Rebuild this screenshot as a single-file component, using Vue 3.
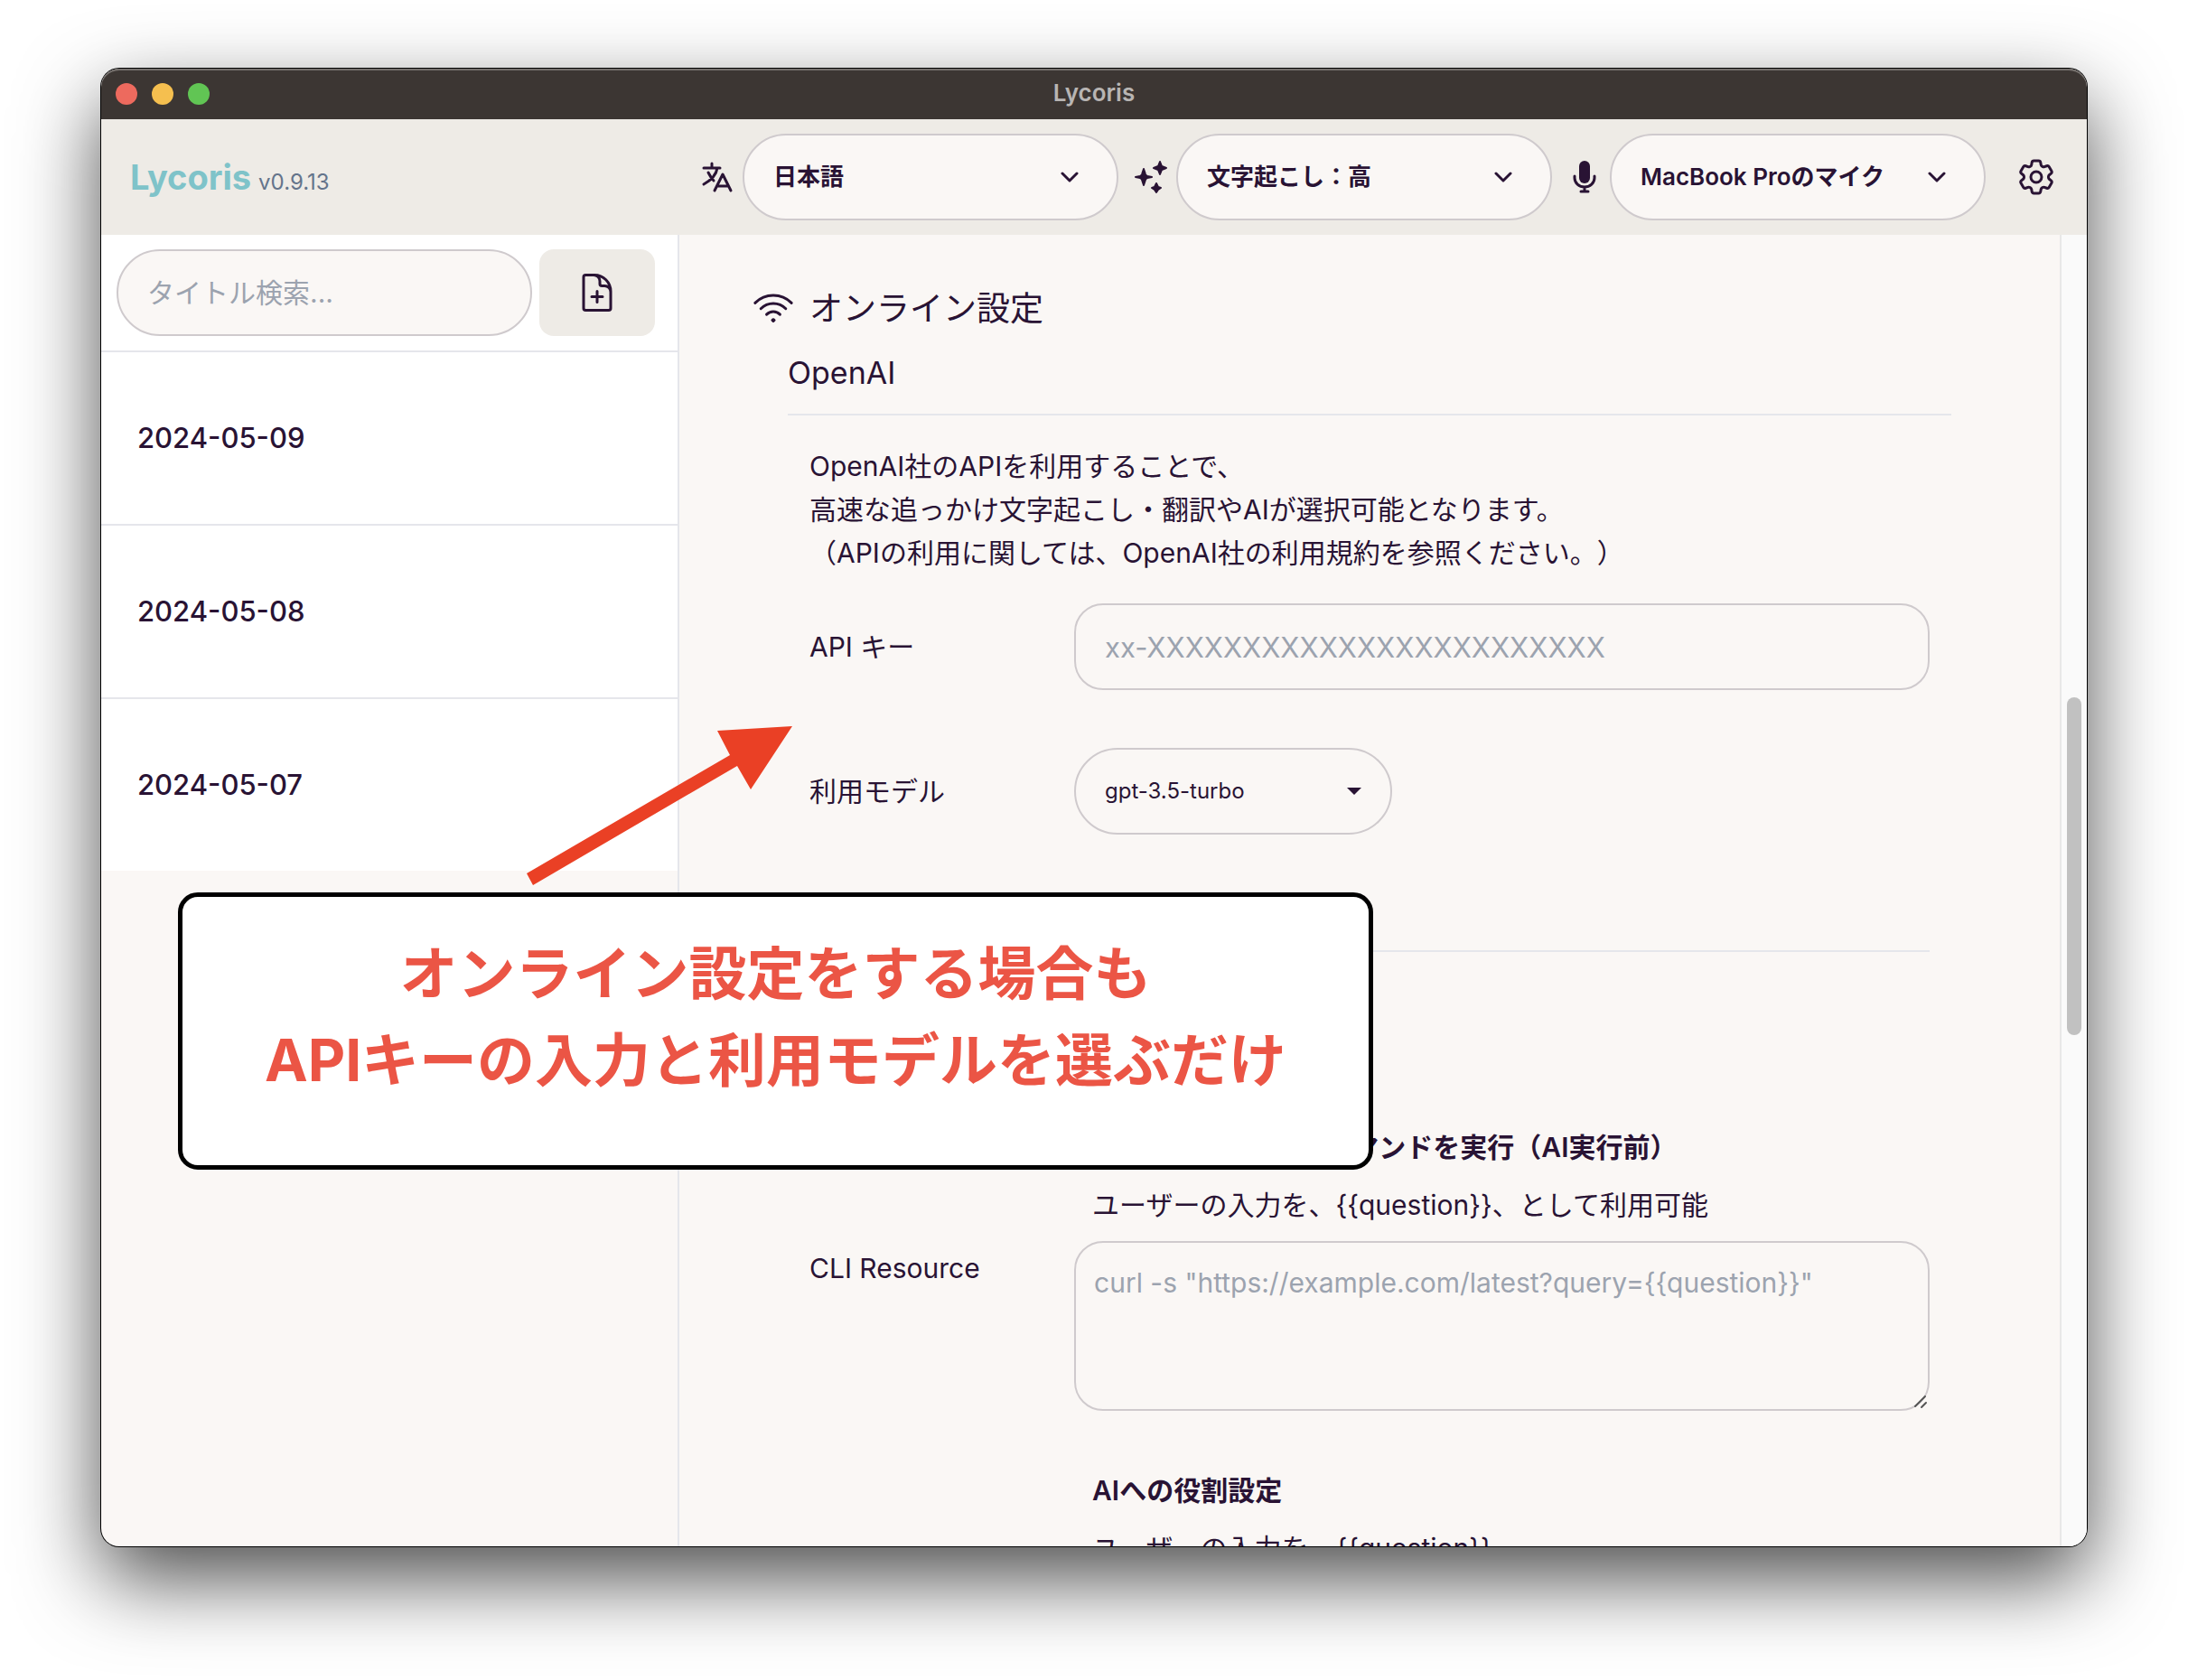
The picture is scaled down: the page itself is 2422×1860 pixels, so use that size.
<script setup>
import { ref } from 'vue'

const question = '{{question}}'
const query = ref('')
const apiKey = ref('')
const cli = ref('')
const model = ref('gpt-3.5-turbo')
const notes = ['2024-05-09', '2024-05-08', '2024-05-07']
const pickers = [
  { id: 'language', label: '言語', value: '日本語' },
  { id: 'transcribe', label: '文字起こし', value: '文字起こし：高' },
  { id: 'mic', label: 'マイク', value: 'MacBook Proのマイク' },
]
</script>

<template>
  <div class="stage">
    <div class="window">
      <div class="titlebar">
        <div class="lights"><i class="red"></i><i class="yellow"></i><i class="green"></i></div>
        <span class="title">Lycoris</span>
      </div>

      <header class="header">
        <div class="brand"><strong>Lycoris</strong><span>v0.9.13</span></div>
        <div class="tools">
          <div v-for="p in pickers" :key="p.id" class="picker">
            <label :for="p.id" :aria-label="p.label">
              <svg v-if="p.id === 'language'" class="icon" viewBox="0 0 40 40" fill="none" stroke="currentColor" stroke-width="3" stroke-linecap="round" stroke-linejoin="round">
                <path d="M14 5v5M5 10h18M20 10c-1 7-6 13-15 18M10 15c2 4 4 7 6 9M17 35l9-18 9 18M20 30h12" />
              </svg>
              <svg v-else-if="p.id === 'transcribe'" class="icon" viewBox="0 0 40 40" fill="currentColor" stroke="currentColor" stroke-width="2" stroke-linejoin="round">
                <path d="M12 11l2 6c.4 1 .8 1.500 2 2l5 1-5 1c-1.200.500-1.600 1-2 2l-2 6-2-6c-.4-1-.8-1.500-2-2l-5-1 5-1c1.200-.5 1.600-1 2-2z" />
                <path d="M30 3l2 5 5 2-5 2-2 5-2-5-5-2 5-2z" />
                <path d="M26 27l2 4 3 1-3 2-2 3-2-3-3-2 3-1z" />
              </svg>
              <svg v-else class="icon" viewBox="0 0 40 40" fill="none" stroke="currentColor" stroke-width="3" stroke-linecap="round">
                <rect x="14" y="2" width="12" height="25" rx="6" fill="currentColor" stroke="none" />
                <path d="M9 19v2a11 10 0 0 0 22 0v-2M20 31v5M16 36h8" />
              </svg>
            </label>
            <div class="select-box">
              <select :id="p.id"><option>{{ p.value }}</option></select>
              <svg class="chevron" viewBox="0 0 20 12" fill="none" stroke="currentColor" stroke-width="3" stroke-linecap="round" stroke-linejoin="round"><path d="M2 2l8 8 8-8" /></svg>
            </div>
          </div>
          <button class="gear" type="button" aria-label="設定">
            <svg viewBox="0 0 24 24" fill="none" stroke="currentColor" stroke-width="1.5" stroke-linecap="round" stroke-linejoin="round">
              <path d="M9.594 3.94c.09-.542.56-.94 1.11-.94h2.593c.55 0 1.020.398 1.110.94l.213 1.281c.063.374.313.686.645.87.074.04.147.083.22.127.325.196.72.257 1.075.124l1.217-.456a1.125 1.125 0 0 1 1.370.49l1.296 2.247a1.125 1.125 0 0 1-.26 1.431l-1.003.827c-.293.241-.438.613-.43.992a7.723 7.723 0 0 1 0 .255c-.008.378.137.75.43.991l1.004.827c.424.35.534.955.26 1.430l-1.298 2.247a1.125 1.125 0 0 1-1.369.491l-1.217-.456c-.355-.133-.75-.072-1.076.124a6.470 6.470 0 0 1-.22.128c-.331.183-.581.495-.644.869l-.213 1.281c-.09.543-.56.94-1.110.94h-2.594c-.55 0-1.019-.398-1.110-.94l-.213-1.281c-.062-.374-.312-.686-.644-.87a6.520 6.520 0 0 1-.22-.127c-.325-.196-.72-.257-1.076-.124l-1.217.456a1.125 1.125 0 0 1-1.369-.49l-1.297-2.247a1.125 1.125 0 0 1 .26-1.431l1.004-.827c.292-.24.437-.613.43-.991a6.932 6.932 0 0 1 0-.255c.007-.38-.138-.751-.43-.992l-1.004-.827a1.125 1.125 0 0 1-.26-1.430l1.297-2.247a1.125 1.125 0 0 1 1.370-.491l1.216.456c.356.133.751.072 1.076-.124.072-.044.146-.086.22-.128.332-.183.582-.495.644-.869l.214-1.280Z" />
              <path d="M15 12a3 3 0 1 1-6 0 3 3 0 0 1 6 0Z" />
            </svg>
          </button>
        </div>
      </header>

      <div class="body">
        <aside class="sidebar">
          <div class="search">
            <input v-model="query" type="text" placeholder="タイトル検索..." aria-label="タイトル検索" />
            <button type="button" aria-label="新規作成">
              <svg viewBox="0 0 24 24" fill="none" stroke="currentColor" stroke-width="1.5" stroke-linecap="round" stroke-linejoin="round">
                <path d="M19.5 14.25v-2.625a3.375 3.375 0 0 0-3.375-3.375h-1.500A1.125 1.125 0 0 1 13.5 7.125v-1.500a3.375 3.375 0 0 0-3.375-3.375H8.250m3.750 9v6m3-3H9m1.500-12H5.625c-.621 0-1.125.504-1.125 1.125v17.250c0 .621.504 1.125 1.125 1.125h12.750c.621 0 1.125-.504 1.125-1.125V11.250a9 9 0 0 0-9-9Z" />
              </svg>
            </button>
          </div>
          <ul class="notes">
            <li v-for="n in notes" :key="n"><a href="#">{{ n }}</a></li>
          </ul>
        </aside>

        <main class="content">
          <h2>
            <svg viewBox="0 0 24 24" fill="none" stroke="currentColor" stroke-width="1.5" stroke-linecap="round" stroke-linejoin="round">
              <path d="M8.288 15.038a5.250 5.250 0 0 1 7.424 0M5.106 11.856c3.807-3.808 9.980-3.808 13.788 0M1.924 8.674c5.565-5.565 14.587-5.565 20.152 0M12.530 18.220l-.53.53-.53-.53a.75.75 0 0 1 1.060 0Z" />
            </svg>
            オンライン設定
          </h2>
          <section class="provider">
            <h3>OpenAI</h3>
            <div class="fields">
              <p class="lead">
                OpenAI社のAPIを利用することで、<br />
                高速な追っかけ文字起こし・翻訳やAIが選択可能となります。<br />
                （APIの利用に関しては、OpenAI社の利用規約を参照ください。）
              </p>
              <div class="row">
                <label for="api-key">API キー</label>
                <input id="api-key" v-model="apiKey" class="key" type="text" placeholder="xx-XXXXXXXXXXXXXXXXXXXXXXXX" />
              </div>
              <div class="row">
                <label for="model">利用モデル</label>
                <div class="select-box model">
                  <select id="model" v-model="model"><option>gpt-3.5-turbo</option></select>
                  <svg class="caret" viewBox="0 0 16 8" fill="currentColor"><path d="M0 0h16L8 8z" /></svg>
                </div>
              </div>
              <hr />
              <div class="row">
                <label for="cli">CLI Resource</label>
                <div class="stack">
                  <h4>CLIから任意の外部コマンドを実行（AI実行前）</h4>
                  <p>ユーザーの入力を、{{ question }}、として利用可能</p>
                  <div class="area">
                    <textarea id="cli" v-model="cli" :placeholder="`curl -s &quot;https://example.com/latest?query=${question}&quot;`"></textarea>
                    <svg class="grip" viewBox="0 0 16 16" fill="none" stroke="#555" stroke-width="2" stroke-linecap="round"><path d="M2 13L13 2M9 14l5-5" /></svg>
                  </div>
                </div>
              </div>
              <div class="row">
                <span></span>
                <div class="stack">
                  <h4>AIへの役割設定</h4>
                  <p>ユーザーの入力を、{{ question }}</p>
                </div>
              </div>
            </div>
          </section>
        </main>
        <div class="scrollbar"><div class="thumb"></div></div>
      </div>
    </div>

    <svg class="arrow" viewBox="0 0 294 176" fill="#ea4025"><path d="M0 163L225 32 211 5 294 0 248 70 233 44 7 176z" /></svg>
    <div class="callout">オンライン設定をする場合も<br />APIキーの入力と利用モデルを選ぶだけ</div>
  </div>
</template>

<style>
body {
  margin: 0;
  background: #fff;
}
</style>

<style scoped>
* {
  box-sizing: border-box;
}
.stage {
  position: relative;
  height: 100vh;
  padding: 76px 112px 148px;
  overflow: hidden;
  font-family: Inter, "Noto Sans CJK JP", sans-serif;
  font-size: 30px;
  line-height: 48px;
  text-spacing-trim: space-all;
  color: #291334;
}
.window {
  display: flex;
  flex-direction: column;
  height: 100%;
  overflow: hidden;
  border-radius: 20px;
  background: #faf7f5;
  box-shadow: 0 0 0 1px #000, 0 36px 90px rgba(0, 0, 0, 0.7);
}
.titlebar {
  display: grid;
  grid-template-columns: 1fr auto 1fr;
  align-items: center;
  flex: none;
  height: 56px;
  padding: 0 16px;
  border-radius: 20px 20px 0 0;
  background: #3c3633;
  box-shadow: inset 0 2px 0 #75706d;
}
.lights {
  display: flex;
  gap: 16px;
}
.lights i {
  width: 24px;
  height: 24px;
  border-radius: 50%;
}
.red {
  background: #ed6a5e;
}
.yellow {
  background: #f5bf4f;
}
.green {
  background: #61c554;
}
.title {
  padding-bottom: 2px;
  font-size: 26px;
  font-weight: 600;
  color: #b8b5b3;
}
.header {
  display: flex;
  align-items: center;
  justify-content: space-between;
  flex: none;
  height: 128px;
  padding: 0 36px 0 32px;
  background: #eeebe6;
}
.brand {
  display: flex;
  align-items: baseline;
  gap: 8px;
  padding-top: 6px;
}
.brand strong {
  font-size: 38px;
  color: #7fc3c9;
}
.brand span {
  font-size: 24px;
  color: #64748b;
}
.tools {
  display: flex;
  align-items: center;
  gap: 16px;
}
.picker {
  display: flex;
  align-items: center;
  gap: 8px;
}
.picker label {
  display: flex;
}
.icon {
  width: 40px;
  height: 40px;
}
.select-box {
  display: grid;
  align-items: center;
  width: 416px;
}
.select-box > * {
  grid-area: 1 / 1;
}
.select-box svg {
  justify-self: end;
  pointer-events: none;
}
input,
select,
textarea {
  width: 100%;
  height: 96px;
  margin: 0;
  padding: 0 32px;
  border: 2px solid #cfcacd;
  border-radius: 32px;
  outline: none;
  background: #faf7f5;
  color: inherit;
  font: inherit;
}
select {
  appearance: none;
  border-radius: 48px;
  font-size: 26px;
  font-weight: 600;
}
::placeholder {
  color: #9ca3af;
  opacity: 1;
}
.key {
  font-size: 31px;
}
.chevron {
  width: 20px;
  height: 12px;
  margin-right: 44px;
}
button {
  display: flex;
  align-items: center;
  justify-content: center;
  padding: 0;
  border: 0;
  background: none;
  color: inherit;
}
button svg {
  flex: none;
  width: 48px;
  height: 48px;
}
.gear {
  width: 40px;
  height: 96px;
  margin-left: 20px;
}
.body {
  display: flex;
  flex: 1;
  min-height: 0;
}
.sidebar {
  flex: none;
  width: 640px;
  border-right: 2px solid #e5e6eb;
}
.search {
  display: flex;
  gap: 8px;
  padding: 16px 25px 16px 17px;
  border-bottom: 2px solid #e5e6eb;
  background: #fff;
}
.search input {
  flex: 1;
  min-width: 0;
  border-radius: 48px;
}
.search button {
  width: 128px;
  height: 96px;
  border-radius: 16px;
  background: #eeebe6;
}
.notes {
  margin: 0;
  padding: 0;
  list-style: none;
  background: #fff;
}
.notes li {
  border-bottom: 2px solid #e5e6eb;
}
.notes li:last-child {
  border-bottom: 0;
}
.notes a {
  display: block;
  padding: 71px 40px;
  color: inherit;
  font-size: 31px;
  font-weight: 500;
  text-decoration: none;
}
.content {
  flex: 1;
  min-width: 0;
  overflow: hidden;
  padding: 58px 120px 0;
}
h2,
h3,
h4,
p {
  margin: 0;
}
h2 {
  display: flex;
  align-items: center;
  gap: 16px;
  margin-left: -40px;
  font-size: 37px;
  font-weight: 400;
}
h2 svg {
  width: 48px;
  height: 48px;
}
h3 {
  padding: 23px 0 21px;
  border-bottom: 2px solid #e5e6eb;
  font-size: 34px;
  font-weight: 400;
}
.fields {
  display: flex;
  flex-direction: column;
  gap: 64px;
  padding: 32px 24px;
}
.lead {
  margin-bottom: -32px;
}
.row {
  display: grid;
  grid-template-columns: 293px 1fr;
  align-items: center;
}
.model {
  width: 352px;
}
.model select {
  font-size: 24px;
  font-weight: 400;
}
.caret {
  width: 16px;
  height: 8px;
  margin-right: 34px;
}
hr {
  width: 100%;
  height: 2px;
  margin: 64px 0 128px;
  border: 0;
  background: #e5e6eb;
}
.stack {
  display: flex;
  flex-direction: column;
  gap: 16px;
}
h4,
.stack p {
  padding-left: 20px;
}
h4 {
  font-size: 30px;
  font-weight: 600;
}
.area {
  position: relative;
  display: flex;
}
textarea {
  height: 188px;
  padding: 20px;
  resize: none;
}
.grip {
  position: absolute;
  right: 2px;
  bottom: 2px;
  width: 16px;
  height: 16px;
}
.scrollbar {
  flex: none;
  width: 30px;
  padding: 0 6px;
  border-left: 2px solid #e8e8e8;
  background: #fafafa;
}
.thumb {
  width: 16px;
  height: 374px;
  margin-top: 512px;
  border-radius: 8px;
  background: #c1c1c1;
}
.arrow {
  position: absolute;
  top: 804px;
  left: 583px;
  width: 294px;
  height: 176px;
}
.callout {
  position: absolute;
  top: 988px;
  left: 197px;
  width: 1323px;
  height: 307px;
  padding-top: 37px;
  border: 5px solid #000;
  border-radius: 22px;
  background: #fff;
  color: #eb5545;
  font-size: 64px;
  font-weight: 700;
  line-height: 96px;
  text-align: center;
}
</style>
